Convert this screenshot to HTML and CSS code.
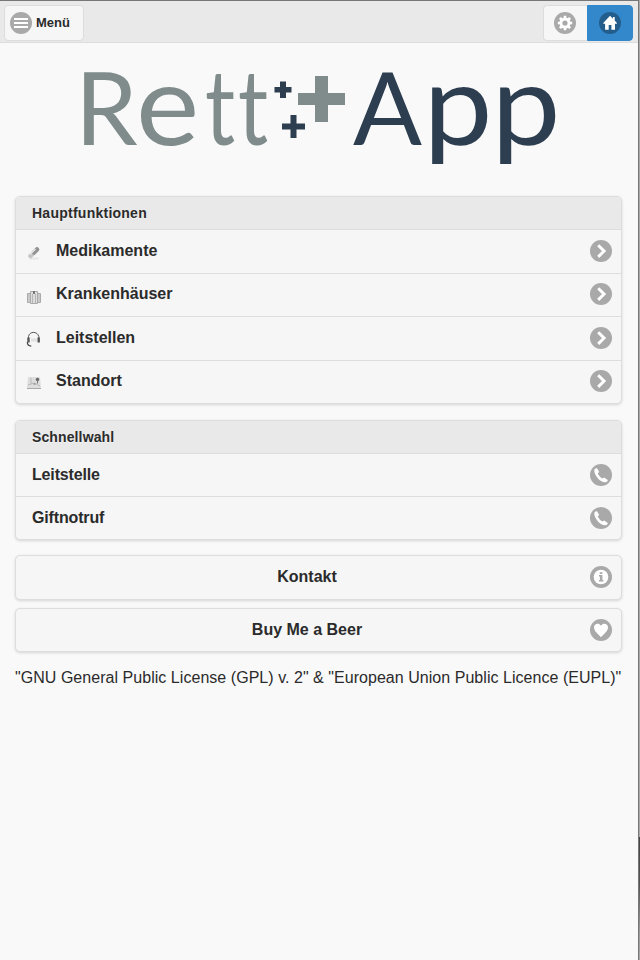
FILE: index.html
```
<!DOCTYPE html>
<html lang="de">
<head>
<meta charset="utf-8">
<title>Rett App</title>
<link rel="stylesheet" href="styles.css">
</head>
<body>
<svg class="defs" width="0" height="0" aria-hidden="true">
  <symbol id="arrow" viewBox="0 0 22 22"><path d="M8.200 5.300l5.900 5.800-5.900 5.800" fill="none" stroke="#fff" stroke-width="2.900"/></symbol>
  <symbol id="phone" viewBox="0 0 22 22"><path d="M4.300 5.800C4.700 4.600 6 4 7 4.200l2.300 3.700-1.600 1.400c.9 2.100 2.500 3.900 4.600 5.200l1.800-1.100 3.700 2.500c-.1 1.200-1 2.100-2.200 2.300-2.800.3-5.900-1.700-8-4.200-2-2.400-3.600-5.400-3.300-8.200z" fill="#fff"/></symbol>
  <symbol id="info" viewBox="0 0 22 22"><circle cx="11" cy="11" r="7.300" fill="#fff"/><path d="M9.800 6.200h2.600v1.900H9.800zM9 9.100h3.400v5h1v1.300H8.900v-1.300h1v-3.700H9z" fill="#a9a9a9"/></symbol>
  <symbol id="heart" viewBox="0 0 22 22"><path d="M11 18.200C8.300 15.200 4 12.400 4 8.300 4 4.300 9.100 3.300 11 6.700 12.900 3.300 18 4.300 18 8.300c0 4.100-4.300 6.900-7 9.900z" fill="#fff"/></symbol>
</svg>
<div class="page">
  <header class="bar">
    <a class="btn menu"><svg class="disc" viewBox="0 0 22 22"><path d="M4 7h14M4 11h14M4 15h14" stroke="#fff" stroke-width="2.200"/></svg><span>Menü</span></a>
    <nav class="tools">
      <a class="btn gear"><svg class="disc" viewBox="0 0 22 22"><circle cx="11" cy="11" r="4.100" fill="none" stroke="#fff" stroke-width="3"/><path d="M11 3.800v2.500M11 15.700v2.500M3.800 11h2.500M15.700 11h2.500M5.900 5.900l1.800 1.800M14.300 14.300l1.800 1.800M5.900 16.100l1.800-1.800M14.300 7.700l1.800-1.800" stroke="#fff" stroke-width="2.700"/></svg></a>
      <a class="btn home"><svg class="disc" viewBox="0 0 22 22"><path d="M11 3.700L4.300 11v.7h1.800V17.700h3.600V13h2.700v4.700h3.600v-6h1.900V11l-2.200-2.400V5h-1.800v1.800z" fill="#fff"/></svg></a>
    </nav>
  </header>
  <main>
    <svg class="logo" viewBox="0 0 640 140" role="img" aria-label="Rett App">
      <g class="grey">
        <text x="75" y="102">R</text>
        <text class="round" transform="translate(136 102) scale(1.060 1)">e</text>
        <text transform="translate(205 102) scale(.84 1.040)">t</text>
        <text transform="translate(238 102) scale(.84 1.040)">t</text>
        <path d="M315 33h13v17h17v12h-17v17h-13V62h-17V50h17z"/>
      </g>
      <g class="navy">
        <path d="M280 38.500h6v5.500h5.500v5.500H286V55h-6v-5.500h-5.500V44h5.500zM290.500 72h6v8.500h8.500v6h-8.500V95h-6v-8.500H282v-6h8.500z"/>
        <text transform="translate(353 102) scale(1.020 1)">A</text>
        <text class="round" transform="translate(423.500 102) scale(1.090 1)">p</text>
        <text class="round" transform="translate(491.500 102) scale(1.090 1)">p</text>
      </g>
    </svg>
    <section class="panel">
      <h2>Hauptfunktionen</h2>
      <a class="row"><svg class="thumb" viewBox="0 0 16 18"><path d="M3.500 14.500h9" stroke="#e5e5e5" stroke-width="2"/><path d="M4.500 12l6.500-6.500" stroke="#c4c4c4" stroke-width="4.500" stroke-linecap="round"/><path d="M8 8.500l3-3" stroke="#929292" stroke-width="4.500" stroke-linecap="round"/><path d="M4 10.500l5.500-5.500" stroke="#e4e4e4" stroke-width="1.500"/></svg><span>Medikamente</span><svg class="disc"><use href="#arrow"/></svg></a>
      <a class="row"><svg class="thumb" viewBox="0 0 16 18"><path d="M1.500 6.500h3v9h-3zM11.500 6.500h3v9h-3zM4.500 4.500h7v12h-7z" fill="#ddd" stroke="#aaa"/><path d="M3 7v8M6.500 7v9M9.500 7v9M13 7v8" stroke="#b5b5b5"/><path d="M7 4h2v3H7z" fill="#777"/></svg><span>Krankenhäuser</span><svg class="disc"><use href="#arrow"/></svg></a>
      <a class="row"><svg class="thumb" viewBox="0 0 16 18"><path d="M2.500 7.500V5.500C3.500 0 11.500 0 12.800 5.500v2" fill="none" stroke="#555"/><path d="M5 9h6" stroke="#e2e2e2" stroke-width="3"/><path d="M2.500 6.500v5M12.700 6.500v5" stroke="#555" stroke-width="2.400"/><path d="M1.300 11c0 2 1.500 4 4 4.200" fill="none" stroke="#444" stroke-width="1.200"/></svg><span>Leitstellen</span><svg class="disc"><use href="#arrow"/></svg></a>
      <a class="row"><svg class="thumb" viewBox="0 0 16 18"><path d="M2 3h12l1 12H1z" fill="#ddd"/><path d="M1 14.500h14" stroke="#aaa"/><path d="M2 11l6-2 6 3M5 4v6" fill="none" stroke="#bbb"/><circle cx="11.500" cy="5.500" r="1.700" fill="#666"/><path d="M11.500 6v3.500M7.500 10h2" stroke="#777"/></svg><span>Standort</span><svg class="disc"><use href="#arrow"/></svg></a>
    </section>
    <section class="panel quick">
      <h2>Schnellwahl</h2>
      <a class="row"><span>Leitstelle</span><svg class="disc"><use href="#phone"/></svg></a>
      <a class="row"><span>Giftnotruf</span><svg class="disc"><use href="#phone"/></svg></a>
    </section>
    <a class="wide contact"><span>Kontakt</span><svg class="disc"><use href="#info"/></svg></a>
    <a class="wide"><span>Buy Me a Beer</span><svg class="disc"><use href="#heart"/></svg></a>
    <p class="license">"GNU General Public License (GPL) v. 2" &amp; "European Union Public Licence (EUPL)"</p>
  </main>
</div>
<div class="edge"></div>
</body>
</html>
```
FILE: styles.css
```
* { box-sizing: border-box; }
body {
  margin: 0;
  height: 960px;
  display: flex;
  overflow: hidden;
  background: #f9f9f9;
  color: #2b2b2b;
  font: 16px "Liberation Sans", Arial, sans-serif;
}
.defs { position: absolute; }
.page { width: 638px; border-top: 1px solid #777; }
.edge {
  width: 2px;
  border-left: 1px solid #777;
  background: linear-gradient(#aaa 837px, #444 837px, #555 885px, #999 930px, #aaa);
}
.bar {
  height: 42px;
  display: flex;
  justify-content: space-between;
  padding: 4px 5px 0 4px;
  background: #e9e9e9;
  border-bottom: 1px solid #ddd;
}
.btn {
  height: 36px;
  display: flex;
  align-items: center;
  background: #f6f6f6;
  border: 1px solid #ddd;
  border-radius: 4px;
}
.menu { width: 80px; padding-left: 5px; gap: 4px; font-size: 13px; font-weight: bold; }
.menu span { padding-bottom: 1px; }
.tools { display: flex; }
.gear, .home { width: 46px; justify-content: center; }
.gear { width: 44px; padding-right: 2px; border-right: 0; border-radius: 4px 0 0 4px; }
.home { background: #38c; border-color: #38c; border-radius: 0 4px 4px 0; }
.disc { flex: none; width: 22px; height: 22px; border-radius: 50%; background: #a9a9a9; }
.home .disc { background: #235d8c; }
main { padding: 0 16px 0 15px; }
.logo { display: block; width: 640px; height: 140px; margin: 0 -15px 13px; overflow: visible; font: 100px Lato, sans-serif; }
.round { font-size: 113px; }
.grey { fill: #7f8c8b; }
.navy { fill: #2c3e50; }
.panel, .wide {
  border: 1px solid #ddd;
  border-radius: 5px;
  background: #f6f6f6;
  box-shadow: 0 1px 3px rgba(0, 0, 0, .15);
  text-shadow: 0 1px 0 #f3f3f3;
}
.panel { height: 208px; margin-bottom: 15.500px; display: flex; flex-direction: column; overflow: hidden; }
.quick { height: 120px; }
h2 {
  height: 32px;
  margin: 0;
  padding-left: 16px;
  background: #e9e9e9;
  font-size: 14px;
  line-height: 32px;
  letter-spacing: .25px;
}
.quick h2 { letter-spacing: .12px; }
.row {
  flex: 1;
  display: flex;
  align-items: center;
  padding: 0 9px 0 16px;
  border-top: 1px solid #ddd;
  font-weight: bold;
}
.row span { flex: 1; padding-bottom: 1px; }
.row .disc { margin-bottom: 1px; }
.quick .row span { padding-bottom: 0; letter-spacing: -.15px; }
.quick .row .disc { margin-bottom: 0; }
.thumb { width: 16px; height: 18px; margin: 3px 14px 0 -6px; }
.wide {
  height: 45px;
  display: flex;
  align-items: center;
  margin-bottom: 8px;
  padding: 0 9px 0 8px;
  font-weight: bold;
}
.contact .disc { margin-bottom: 1px; }
.wide + .wide { height: 44px; }
.wide span { flex: 1; text-align: center; padding-bottom: 1px; }
.license { margin: 17px 0 0; white-space: nowrap; line-height: 18px; letter-spacing: .04px; }
```
